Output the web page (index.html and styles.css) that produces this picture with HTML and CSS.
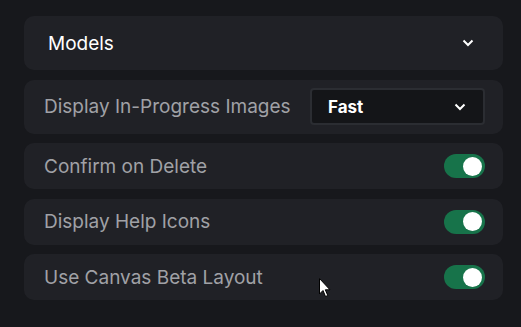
FILE: index.html
```html
<!DOCTYPE html>
<html lang="en">
<head>
  <meta charset="UTF-8">
  <link rel="stylesheet" href="styles.css">
</head>
<body>
  <div class="panel">
    <div class="card card-head">
      <span class="head-title">Models</span>
      <svg class="chev" width="12" height="8" viewBox="0 0 12 8"><path d="M1.5 1.5 L6 6 L10.5 1.5" fill="none" stroke="#fff" stroke-width="2"/></svg>
    </div>

    <div class="card card-tall">
      <span class="label">Display In-Progress Images</span>
      <div class="select">
        <span>Fast</span>
        <svg class="chev" width="12" height="8" viewBox="0 0 12 8"><path d="M1.5 1.5 L6 6 L10.5 1.5" fill="none" stroke="#fff" stroke-width="2"/></svg>
      </div>
    </div>

    <div class="card">
      <span class="label">Confirm on Delete</span>
      <div class="switch"><div class="knob"></div></div>
    </div>

    <div class="card">
      <span class="label">Display Help Icons</span>
      <div class="switch"><div class="knob"></div></div>
    </div>

    <div class="card">
      <span class="label">Use Canvas Beta Layout</span>
      <div class="switch"><div class="knob"></div></div>
    </div>
  </div>

  <svg class="cursor" width="13" height="20" viewBox="0 0 13 20">
    <path d="M0.5 0.5 L0.5 16 L4 12.5 L6.5 18.5 L8.8 17.5 L6.3 11.8 L11 11.8 Z" fill="#fff" stroke="#000" stroke-width="1"/>
  </svg>
</body>
</html>
```

FILE: styles.css
```css
* {
  box-sizing: border-box;
}

body {
  margin: 0;
  padding: 16px 18px 0 24px;
  background-color: #17181c;
  font-family: 'Inter', 'Liberation Sans', sans-serif;
  width: 521px;
  height: 327px;
  overflow: hidden;
  position: relative;
}

.panel {
  display: flex;
  flex-direction: column;
  gap: 9.5px;
  width: 479px;
}

.card {
  display: flex;
  align-items: center;
  justify-content: space-between;
  height: 46px;
  padding: 0 18px 0 20px;
  background-color: #202126;
  border-radius: 10px;
}

.card-head {
  height: 54px;
  padding: 0 29px 0 24px;
}

.card-tall {
  height: 54px;
}

.head-title {
  color: #fff;
  font-size: 19px;
}

.label {
  color: #a0a1a6;
  font-size: 19px;
}

.chev {
  display: block;
}

.select {
  display: flex;
  align-items: center;
  justify-content: space-between;
  width: 175px;
  height: 37px;
  padding: 0 17px 0 16px;
  background-color: #141518;
  border: 2px solid #2b2d32;
  border-radius: 4px;
  color: #fff;
  font-size: 17px;
  font-weight: 700;
}

.switch {
  display: flex;
  align-items: center;
  justify-content: flex-end;
  width: 41px;
  height: 24px;
  padding: 0 3px;
  background-color: #17734a;
  border-radius: 12px;
}

.knob {
  width: 19px;
  height: 19px;
  border-radius: 50%;
  background-color: #fff;
}

.cursor {
  position: absolute;
  left: 319px;
  top: 278px;
}
```
